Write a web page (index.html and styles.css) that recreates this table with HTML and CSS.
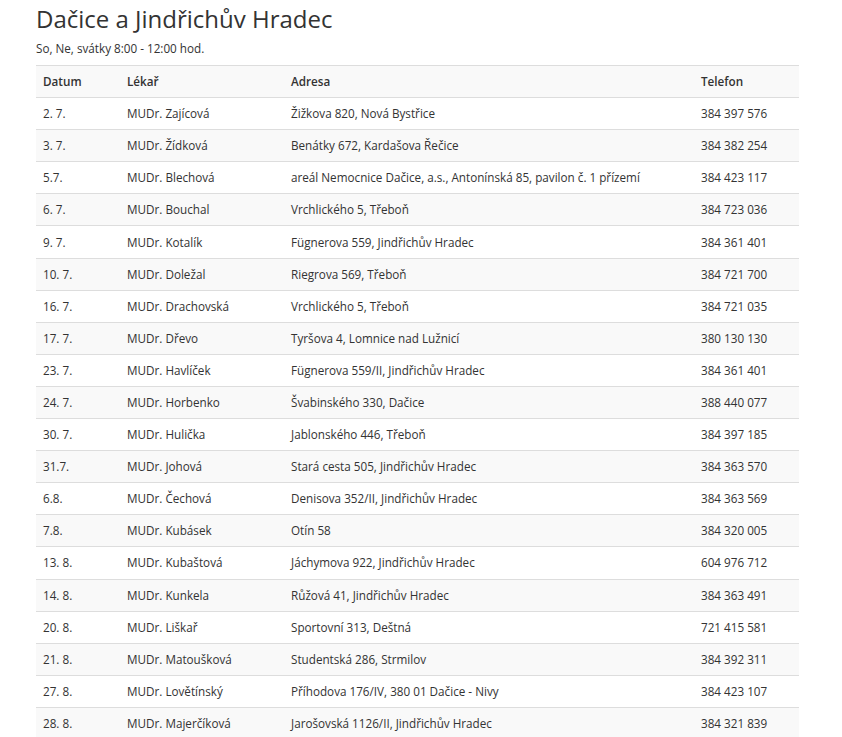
FILE: index.html
```html
<!DOCTYPE html>
<html lang="cs">
<head>
<meta charset="utf-8">
<title>Dačice a Jindřichův Hradec</title>
<link rel="stylesheet" href="styles.css">
</head>
<body>
<div class="page">
  <h1 class="title">Dačice a Jindřichův Hradec</h1>
  <p class="note">So, Ne, svátky 8:00 - 12:00 hod.</p>
  <table class="duty">
    <colgroup>
      <col class="c-date"><col class="c-doc"><col class="c-addr"><col class="c-tel">
    </colgroup>
    <thead>
      <tr><th>Datum</th><th>Lékař</th><th>Adresa</th><th>Telefon</th></tr>
    </thead>
    <tbody>
      <tr><td>2. 7.</td><td>MUDr. Zajícová</td><td>Žižkova 820, Nová Bystřice</td><td>384 397 576</td></tr>
      <tr><td>3. 7.</td><td>MUDr. Žídková</td><td>Benátky 672, Kardašova Řečice</td><td>384 382 254</td></tr>
      <tr><td>5.7.</td><td>MUDr. Blechová</td><td>areál Nemocnice Dačice, a.s., Antonínská 85, pavilon č. 1 přízemí</td><td>384 423 117</td></tr>
      <tr><td>6. 7.</td><td>MUDr. Bouchal</td><td>Vrchlického 5, Třeboň</td><td>384 723 036</td></tr>
      <tr><td>9. 7.</td><td>MUDr. Kotalík</td><td>Fügnerova 559, Jindřichův Hradec</td><td>384 361 401</td></tr>
      <tr><td>10. 7.</td><td>MUDr. Doležal</td><td>Riegrova 569, Třeboň</td><td>384 721 700</td></tr>
      <tr><td>16. 7.</td><td>MUDr. Drachovská</td><td>Vrchlického 5, Třeboň</td><td>384 721 035</td></tr>
      <tr><td>17. 7.</td><td>MUDr. Dřevo</td><td>Tyršova 4, Lomnice nad Lužnicí</td><td>380 130 130</td></tr>
      <tr><td>23. 7.</td><td>MUDr. Havlíček</td><td>Fügnerova 559/II, Jindřichův Hradec</td><td>384 361 401</td></tr>
      <tr><td>24. 7.</td><td>MUDr. Horbenko</td><td>Švabinského 330, Dačice</td><td>388 440 077</td></tr>
      <tr><td>30. 7.</td><td>MUDr. Hulička</td><td>Jablonského 446, Třeboň</td><td>384 397 185</td></tr>
      <tr><td>31.7.</td><td>MUDr. Johová</td><td>Stará cesta 505, Jindřichův Hradec</td><td>384 363 570</td></tr>
      <tr><td>6.8.</td><td>MUDr. Čechová</td><td>Denisova 352/II, Jindřichův Hradec</td><td>384 363 569</td></tr>
      <tr><td>7.8.</td><td>MUDr. Kubásek</td><td>Otín 58</td><td>384 320 005</td></tr>
      <tr><td>13. 8.</td><td>MUDr. Kubaštová</td><td>Jáchymova 922, Jindřichův Hradec</td><td>604 976 712</td></tr>
      <tr><td>14. 8.</td><td>MUDr. Kunkela</td><td>Růžová 41, Jindřichův Hradec</td><td>384 363 491</td></tr>
      <tr><td>20. 8.</td><td>MUDr. Liškař</td><td>Sportovní 313, Deštná</td><td>721 415 581</td></tr>
      <tr><td>21. 8.</td><td>MUDr. Matoušková</td><td>Studentská 286, Strmilov</td><td>384 392 311</td></tr>
      <tr><td>27. 8.</td><td>MUDr. Lovětínský</td><td>Příhodova 176/IV, 380 01 Dačice - Nivy</td><td>384 423 107</td></tr>
      <tr><td>28. 8.</td><td>MUDr. Majerčíková</td><td>Jarošovská 1126/II, Jindřichův Hradec</td><td>384 321 839</td></tr>
    </tbody>
  </table>
</div>
</body>
</html>
```

FILE: styles.css
```css
html, body {
  margin: 0;
  padding: 0;
  background: #fff;
}
body {
  font-family: "Open Sans", "Liberation Sans", sans-serif;
  color: #333;
  font-size: 11.7px;
}
.page {
  padding: 0 43px 0 36px;
}
.title {
  margin: 0;
  padding-top: 2px;
  font-size: 24px;
  font-weight: 400;
  line-height: 34px;
  color: #333;
}
.note {
  margin: 4px 0 0;
  line-height: 17px;
  font-size: 11.7px;
}
.duty {
  margin-top: 8px;
  width: 763px;
  border-collapse: collapse;
  table-layout: fixed;
}
.c-date { width: 84px; }
.c-doc { width: 164px; }
.c-addr { width: 410px; }
.c-tel { width: 105px; }
.duty th,
.duty td {
  text-align: left;
  padding: 0 7px;
  height: 31.1px;
  line-height: 17px;
  border-top: 1px solid #ddd;
  vertical-align: middle;
  white-space: nowrap;
}
.duty th {
  font-weight: 600;
  background: #f9f9f9;
  border-bottom: 1px solid #ddd;
}
.duty tbody tr:nth-child(even) td {
  background: #f9f9f9;
}
```
